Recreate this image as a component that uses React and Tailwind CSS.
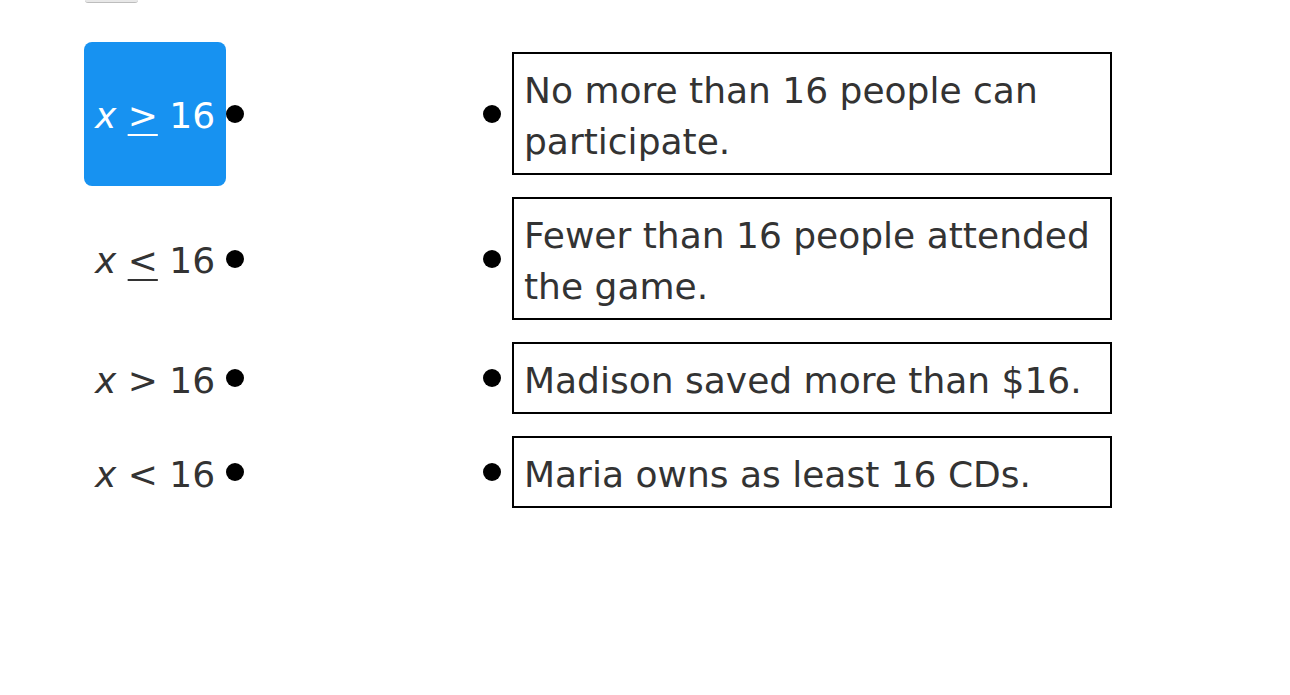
import React from "react";

const rows = [
  { op: ">", under: true, text: "No more than 16 people can participate.", h: "h-[123px]", selected: true },
  { op: "<", under: true, text: "Fewer than 16 people attended the game.", h: "h-[123px]" },
  { op: ">", under: false, text: "Madison saved more than $16.", h: "h-[72px]" },
  { op: "<", under: false, text: "Maria owns as least 16 CDs.", h: "h-[72px]" },
];

const Dot = () => <div className="w-[18px] h-[18px] rounded-full bg-black shrink-0" />;

const App = () => {
  return (
    <div
      className="min-h-screen bg-white text-[#333333]"
      style={{ fontFamily: "'DejaVu Sans', Verdana, sans-serif" }}
    >
      {/* cut-off button at the top */}
      <div className="ml-[85px] w-[53px] h-[3px] bg-[#e8e8e8] border-b border-[#bdbdbd] rounded-b-[4px]" />

      <div className="pt-[49px] flex flex-col gap-[22px]">
        {rows.map((row, i) => (
          <div key={i} className={`flex items-center pl-[84px] ${row.h}`}>
            <div
              className={`w-[142px] h-[144px] shrink-0 flex items-center justify-center pt-[5px] rounded-[8px] text-[36px] ${
                row.selected ? "bg-[#1792f1] text-white" : "text-[#333333]"
              }`}
            >
              <span className="whitespace-nowrap">
                <i>x</i>{" "}
                <span className={row.under ? "underline underline-offset-[6px] decoration-[2px]" : ""}>
                  {row.op}
                </span>{" "}
                16
              </span>
            </div>
            <Dot />
            <div className="w-[239px] shrink-0" />
            <Dot />
            <div className="ml-[11px] w-[600px] h-full shrink-0 border-2 border-black px-[10px] pt-[11px] pb-[6px] text-[36px] leading-[51px]">
              {row.text}
            </div>
          </div>
        ))}
      </div>
    </div>
  );
};

export default App;
